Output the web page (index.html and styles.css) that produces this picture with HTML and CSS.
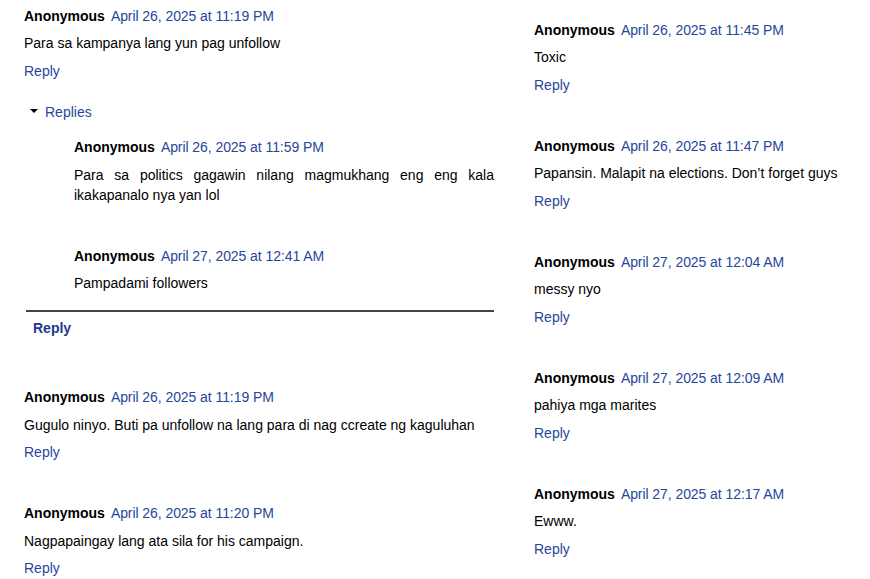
FILE: index.html
```html
<!DOCTYPE html>
<html lang="en">
<head>
  <meta charset="UTF-8" />
  <title>Comments</title>
  <link rel="stylesheet" href="styles.css">
</head>
<body>
  <div class="columns">
    <div class="col col-left">
      <div class="comment">
        <div class="comment-head"><span class="author">Anonymous</span><a class="date" href="#">April 26, 2025 at 11:19 PM</a></div>
        <p class="comment-body">Para sa kampanya lang yun pag unfollow</p>
        <a class="reply" href="#">Reply</a>
      </div>

      <div class="thread">
        <div class="thread-toggle"><span class="caret"></span><a href="#">Replies</a></div>
        <div class="thread-list">
          <div class="comment nested">
            <div class="comment-head"><span class="author">Anonymous</span><a class="date" href="#">April 26, 2025 at 11:59 PM</a></div>
            <p class="comment-body justify">Para sa politics gagawin nilang magmukhang eng eng kala ikakapanalo nya yan lol</p>
          </div>
          <div class="comment nested">
            <div class="comment-head"><span class="author">Anonymous</span><a class="date" href="#">April 27, 2025 at 12:41 AM</a></div>
            <p class="comment-body">Pampadami followers</p>
          </div>
        </div>
        <div class="thread-reply"><a href="#">Reply</a></div>
      </div>

      <div class="comment">
        <div class="comment-head"><span class="author">Anonymous</span><a class="date" href="#">April 26, 2025 at 11:19 PM</a></div>
        <p class="comment-body">Gugulo ninyo. Buti pa unfollow na lang para di nag ccreate ng kaguluhan</p>
        <a class="reply" href="#">Reply</a>
      </div>

      <div class="comment">
        <div class="comment-head"><span class="author">Anonymous</span><a class="date" href="#">April 26, 2025 at 11:20 PM</a></div>
        <p class="comment-body">Nagpapaingay lang ata sila for his campaign.</p>
        <a class="reply" href="#">Reply</a>
      </div>
    </div>

    <div class="col col-right">
      <div class="comment">
        <div class="comment-head"><span class="author">Anonymous</span><a class="date" href="#">April 26, 2025 at 11:45 PM</a></div>
        <p class="comment-body">Toxic</p>
        <a class="reply" href="#">Reply</a>
      </div>
      <div class="comment">
        <div class="comment-head"><span class="author">Anonymous</span><a class="date" href="#">April 26, 2025 at 11:47 PM</a></div>
        <p class="comment-body">Papansin. Malapit na elections. Don’t forget guys</p>
        <a class="reply" href="#">Reply</a>
      </div>
      <div class="comment">
        <div class="comment-head"><span class="author">Anonymous</span><a class="date" href="#">April 27, 2025 at 12:04 AM</a></div>
        <p class="comment-body">messy nyo</p>
        <a class="reply" href="#">Reply</a>
      </div>
      <div class="comment">
        <div class="comment-head"><span class="author">Anonymous</span><a class="date" href="#">April 27, 2025 at 12:09 AM</a></div>
        <p class="comment-body">pahiya mga marites</p>
        <a class="reply" href="#">Reply</a>
      </div>
      <div class="comment">
        <div class="comment-head"><span class="author">Anonymous</span><a class="date" href="#">April 27, 2025 at 12:17 AM</a></div>
        <p class="comment-body">Ewww.</p>
        <a class="reply" href="#">Reply</a>
      </div>
    </div>
  </div>
</body>
</html>
```

FILE: styles.css
```css
* {
  box-sizing: border-box;
}

body {
  margin: 0;
  background: #fff;
  color: #000;
  font-family: "Liberation Sans", Arial, sans-serif;
  font-size: 14px;
  line-height: 20px;
  overflow: hidden;
}

a {
  color: #27469a;
  text-decoration: none;
}

.columns {
  display: flex;
  gap: 40px;
  padding-left: 24px;
}

.col-left {
  width: 470px;
  padding-top: 6px;
}

.col-right {
  flex: 1;
  padding-top: 20px;
}

/* Comment */
.comment {
  margin-bottom: 41.2px;
}

.comment-head {
  height: 20px;
  white-space: nowrap;
}

.author {
  font-weight: 700;
}

.date {
  margin-left: 6px;
  letter-spacing: -0.07px;
}

.comment-body {
  margin: 7.4px 0 0;
}

.comment-body.justify {
  text-align: justify;
}

.reply {
  display: block;
  margin-top: 7.4px;
}

/* Replies thread */
.col-left > .comment:first-child {
  margin-bottom: 21px;
}

.thread-toggle {
  display: flex;
  align-items: center;
  padding-left: 6px;
}

.caret {
  width: 0;
  height: 0;
  border-left: 4px solid transparent;
  border-right: 4px solid transparent;
  border-top: 4px solid #000;
  margin-right: 7px;
  margin-top: -2px;
}

.thread-list {
  padding-left: 50px;
  padding-top: 15px;
}

.nested {
  margin-bottom: 41px;
}

.nested .comment-body {
  margin-top: 7.8px;
}

.nested:last-child {
  margin-bottom: 17px;
}

.thread-reply {
  margin-left: 2px;
  border-top: 2px solid #444;
  padding: 6px 0 0 7px;
  margin-bottom: 49px;
}

.thread-reply a {
  font-weight: 700;
  color: #1c3a8c;
}
```
